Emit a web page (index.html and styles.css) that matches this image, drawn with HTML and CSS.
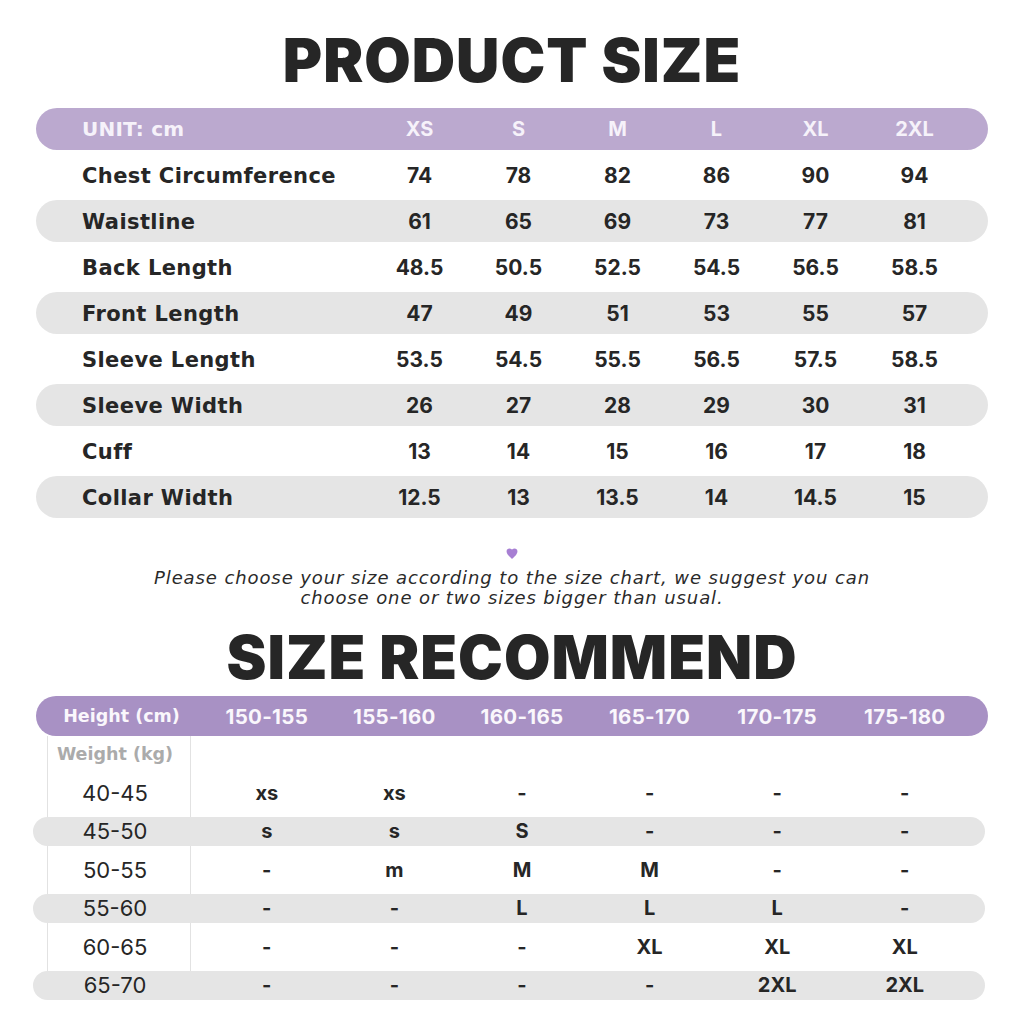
FILE: index.html
```html
<!DOCTYPE html>
<html>
<head>
<meta charset="utf-8">
<link rel="stylesheet" href="styles.css">
</head>
<body>
<div class="page">
  <h1 class="title t1">PRODUCT SIZE</h1>

  <div class="spec">
    <div class="srow shead"><span class="lab">UNIT: cm</span><span>XS</span><span>S</span><span>M</span><span>L</span><span>XL</span><span>2XL</span></div>
    <div class="srow"><span class="lab">Chest Circumference</span><span>74</span><span>78</span><span>82</span><span>86</span><span>90</span><span>94</span></div>
    <div class="srow band"><span class="lab">Waistline</span><span>61</span><span>65</span><span>69</span><span>73</span><span>77</span><span>81</span></div>
    <div class="srow"><span class="lab">Back Length</span><span>48.5</span><span>50.5</span><span>52.5</span><span>54.5</span><span>56.5</span><span>58.5</span></div>
    <div class="srow band"><span class="lab">Front Length</span><span>47</span><span>49</span><span>51</span><span>53</span><span>55</span><span>57</span></div>
    <div class="srow"><span class="lab">Sleeve Length</span><span>53.5</span><span>54.5</span><span>55.5</span><span>56.5</span><span>57.5</span><span>58.5</span></div>
    <div class="srow band"><span class="lab">Sleeve Width</span><span>26</span><span>27</span><span>28</span><span>29</span><span>30</span><span>31</span></div>
    <div class="srow"><span class="lab">Cuff</span><span>13</span><span>14</span><span>15</span><span>16</span><span>17</span><span>18</span></div>
    <div class="srow band"><span class="lab">Collar Width</span><span>12.5</span><span>13</span><span>13.5</span><span>14</span><span>14.5</span><span>15</span></div>
  </div>

  <div class="note">
    <svg class="heart" width="12" height="11" viewBox="0 0 12 11"><path d="M6 11 C4 9 0.2 6 0.6 3 C0.9 0.6 3.6 -0.2 6 1.6 C8.4 -0.2 11.1 0.6 11.4 3 C11.8 6 8 9 6 11 Z" fill="#a77fd3"/></svg>
    <p class="l1">Please choose your size according to the size chart, we suggest you can</p>
    <p class="l2">choose one or two sizes bigger than usual.</p>
  </div>

  <h1 class="title t2">SIZE RECOMMEND</h1>

  <div class="rec">
    <div class="rhead"><span class="hl">Height (cm)</span><span>150-155</span><span>155-160</span><span>160-165</span><span>165-170</span><span>170-175</span><span>175-180</span></div>
    <div class="rbody">
      <div class="wcol"></div>
      <div class="rrow"><span class="w wl">Weight (kg)</span></div>
      <div class="rrow"><span class="w">40-45</span><span>xs</span><span>xs</span><span>-</span><span>-</span><span>-</span><span>-</span></div>
      <div class="rrow band"><span class="w">45-50</span><span>s</span><span>s</span><span>S</span><span>-</span><span>-</span><span>-</span></div>
      <div class="rrow"><span class="w">50-55</span><span>-</span><span>m</span><span>M</span><span>M</span><span>-</span><span>-</span></div>
      <div class="rrow band"><span class="w">55-60</span><span>-</span><span>-</span><span>L</span><span>L</span><span>L</span><span>-</span></div>
      <div class="rrow"><span class="w">60-65</span><span>-</span><span>-</span><span>-</span><span>XL</span><span>XL</span><span>XL</span></div>
      <div class="rrow band"><span class="w">65-70</span><span>-</span><span>-</span><span>-</span><span>-</span><span>2XL</span><span>2XL</span></div>
    </div>
  </div>
</div>
</body>
</html>
```

FILE: styles.css
```css
* { box-sizing: border-box; }
html, body { margin: 0; padding: 0; background: #fff; }
body {
  width: 1024px;
  height: 1024px;
  overflow: hidden;
  font-family: "Inter", "Open Sans", sans-serif;
  color: #262626;
}
.page {
  display: flex;
  flex-direction: column;
  padding-top: 30px;
}
.title {
  margin: 0;
  text-align: center;
  font-size: 60px;
  line-height: 60px;
  font-weight: 900;
  color: #262626;
  letter-spacing: 1px;
}
.t1 { margin-bottom: 18px; }
.t2 { margin-top: 19px; margin-bottom: 9px; }

.spec {
  margin: 0 36px;
  display: flex;
  flex-direction: column;
  gap: 4px;
}
.srow {
  height: 42px;
  border-radius: 21px;
  display: grid;
  grid-template-columns: 1fr repeat(6, 99px);
  padding: 0 24px 0 46px;
  align-items: center;
  font-size: 21px;
  font-weight: 700;
}
.srow span { text-align: center; }
.srow .lab {
  text-align: left;
  font-family: "DejaVu Sans", sans-serif;
  font-size: 21px;
  letter-spacing: 0.4px;
  padding-top: 2px;
}
.shead { background: #bba9cf; color: #f6f2fa; font-size: 20px; }
.shead .lab { font-size: 20px; letter-spacing: 0.2px; padding-top: 0; }
.band { background: #e5e5e5; }

.note {
  margin-top: 30px;
  display: flex;
  flex-direction: column;
  align-items: center;
}
.heart { display: block; margin-bottom: 9px; }
.note p {
  margin: 0;
  text-align: center;
  font-family: "DejaVu Sans", sans-serif;
  font-style: italic;
  font-size: 18px;
  line-height: 20px;
  letter-spacing: 0.9px;
  color: #2a2a2a;
}

.rec { display: flex; flex-direction: column; }
.rhead {
  margin: 0 36px;
  height: 40px;
  border-radius: 20px;
  background: #a891c4;
  color: #faf7fc;
  display: grid;
  grid-template-columns: 167px repeat(6, 127.6px);
  align-items: center;
  font-size: 20.5px;
  font-weight: 700;
  letter-spacing: 0.3px;
}
.rhead span { text-align: center; }
.rhead .hl {
  font-family: "DejaVu Sans", sans-serif;
  font-size: 17.5px;
  letter-spacing: 0;
  padding-left: 4px;
}

.rbody {
  position: relative;
  margin: 0 39px 0 33px;
  padding-top: 3.5px;
  display: flex;
  flex-direction: column;
  gap: 9.5px;
}
.wcol {
  position: absolute;
  left: 14px;
  top: 0;
  width: 144px;
  height: 242px;
  border-left: 1px solid #e2e2e2;
  border-right: 1px solid #e2e2e2;
}
.rrow {
  position: relative;
  height: 29px;
  border-radius: 15px;
  display: grid;
  grid-template-columns: 170px repeat(6, 127.6px);
  align-items: center;
  font-size: 20px;
  font-weight: 700;
}
.rrow span { text-align: center; }
.rrow .w { font-weight: 400; font-size: 22px; padding-right: 6px; }
.rrow .wl {
  font-family: "DejaVu Sans", sans-serif;
  font-weight: 700;
  font-size: 17.5px;
  color: #ababab;
}
```
